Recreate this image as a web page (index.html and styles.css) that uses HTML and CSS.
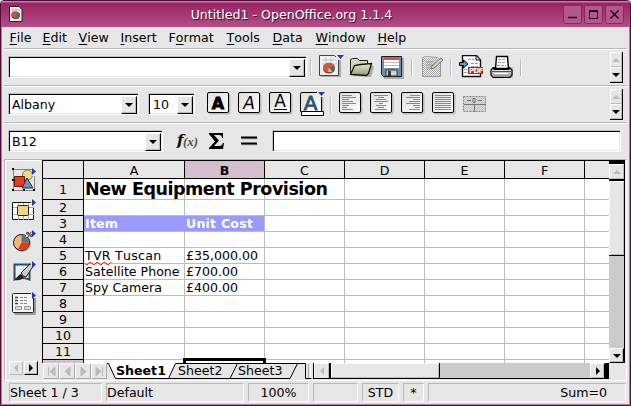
FILE: index.html
```html
<!DOCTYPE html>
<html lang="en">
<head>
<meta charset="utf-8">
<title>Untitled1 - OpenOffice.org 1.1.4</title>
<link rel="stylesheet" href="styles.css">
</head>
<body>
<svg class="defs" width="0" height="0">
  <defs>
    <linearGradient id="face" x1="0" y1="0" x2="1" y2="1"><stop offset="0" stop-color="#dcdcdc"/><stop offset="1" stop-color="#fff"/></linearGradient>
    <linearGradient id="olive" x1="0" y1="0" x2="0" y2="1"><stop offset="0" stop-color="#e8ebd0"/><stop offset="1" stop-color="#92987a"/></linearGradient>
    <linearGradient id="metal" x1="0" y1="0" x2="0" y2="1"><stop offset="0" stop-color="#fff"/><stop offset="1" stop-color="#85858a"/></linearGradient>
    <pattern id="dither" width="2" height="2" patternUnits="userSpaceOnUse"><path d="M0 0h1v1H0zM1 1h1v1H1z" fill="#a8a8a8"/></pattern>
    <g id="tile"><rect x="1.5" y="1.5" width="22" height="21" rx="2" fill="#aaa" opacity=".7"/><rect x=".5" y=".5" width="21" height="20" rx="1.5" fill="url(#face)" stroke="#000"/></g>
    <path id="flag" d="M0 0v7l4-3.5z" fill="#1d3fa5"/>
  </defs>
</svg>
<div class="window">
  <header class="titlebar">
    <svg class="app-icon" width="14" height="17"><path d="M1 .5h9l3 3v12H.5V1z" fill="#eee" stroke="#222"/><path d="M2 4h9M4 2v4M7 2v4" stroke="#bbb"/><ellipse cx="6.500" cy="9" rx="4.500" ry="3.800" fill="#c7503c"/><path d="M7 8l4-1v4l-3 1z" fill="#347880"/><path d="M3 11q3 3 7 1" fill="none" stroke="#71362e"/></svg>
    <h1>Untitled1 - OpenOffice.org 1.1.4</h1>
    <div class="win-buttons">
      <svg width="19" height="19"><rect class="wb" x=".5" y=".5" width="18" height="18" rx="2"/><path d="M5 12.500h9" stroke="#21061a" stroke-width="1.500"/></svg>
      <svg width="19" height="19"><rect class="wb" x=".5" y=".5" width="18" height="18" rx="2"/><path d="M5.500 5.500h8v8h-8zM5 6.500h9" stroke="#21061a" fill="none"/></svg>
      <svg width="19" height="19"><rect class="wb" x=".5" y=".5" width="18" height="18" rx="2"/><path d="M5.500 5.500l8 8m0-8l-8 8" stroke="#21061a" stroke-width="1.500"/></svg>
    </div>
  </header>
  <nav class="menu">
    <span class="m-file"><u>F</u>ile</span><span class="m-edit"><u>E</u>dit</span><span class="m-view"><u>V</u>iew</span><span class="m-insert"><u>I</u>nsert</span><span class="m-format">F<u>o</u>rmat</span><span class="m-tools"><u>T</u>ools</span><span class="m-data"><u>D</u>ata</span><span class="m-window"><u>W</u>indow</span><span><u>H</u>elp</span>
  </nav>

  <section class="bar bar-function">
    <div class="combo url"><span></span><i class="drop"></i></div>
    <i class="grip g1"></i>
    <svg class="i-new" width="27" height="23"><path d="M2 2h20v20H2z" fill="#aaa"/><path d="M.5.5h15l4 4v16H.5z" fill="#f1f1f1" stroke="#444"/><path d="M3 5h15M3 9h15M7 2v16M12 2v6" stroke="#c4c4c4"/><ellipse cx="10" cy="14" rx="6" ry="4.500" fill="#8c3528"/><ellipse cx="10" cy="12.500" rx="6" ry="4.800" fill="#d0583f"/><path d="M10 12.500l6-1q0 4-3 5z" fill="#2a7a86"/><path d="M10 12.500l3 4q-3 1-4 0z" fill="#e7b95b"/><path d="M17 0h8v5h-8z" fill="#e6e6e6"/><path d="M18 0h7l-3.500 4z" fill="#1d3fa5"/></svg>
    <svg class="i-open" width="25" height="23"><path d="M3 20l19 1 3-10-3-3" fill="#aaa"/><path d="M1.500 17.500v-14l2-1h5l2 2h8v4" fill="#d2d6b7" stroke="#222"/><path d="M1.500 18.500l4-9 6-1 11-1-3 10-2 2z" fill="url(#olive)" stroke="#111" stroke-width="1.300"/></svg>
    <svg class="i-save" width="23" height="23"><path d="M2 2h21v21H3z" fill="#aaa"/><path d="M.5.500h20v20h-18l-2-2z" fill="#6c8fac" stroke="#14202b"/><path d="M3 1h15v11H3z" fill="#fff"/><path d="M3 1h15v3H3z" fill="#d95050"/><path d="M3 6.500h15M3 9.500h15" stroke="#bbb"/><path d="M5 14h11v6H5z" fill="#d6d6d2" stroke="#333"/><path d="M7 15h3v5H7z" fill="#333"/></svg>
    <i class="grip g2"></i>
    <svg class="i-edit" width="24" height="23"><path d="M1.500 2.500l3-1 12 1 3 3v16h-18z" fill="#eee" stroke="#999"/><path d="M2 3h17v18H2z" fill="url(#dither)"/><path d="M5 7h7M5 10h7M5 13h5" stroke="#999"/><path d="M10 14l1-3 9-8 2 2-9 8z" fill="#d9d3bf" stroke="#777"/></svg>
    <i class="grip g3"></i>
    <svg class="i-pdf" width="25" height="23"><path d="M3.500.500h14l4 4.500v16.500h-18z" fill="#fff" stroke="#111" stroke-width="1.400"/><path d="M17 1v4h4" fill="#ddd" stroke="#111"/><path d="M9 4.500h6M12 8.500h7M12 11.500h7M5 14.500h4M5 17.500h4" stroke="#999" stroke-dasharray="3 1"/><path d="M.5 7.500h4V5l4.500 4-4.500 4v-2.500h-4z" fill="#5b98c9" stroke="#000"/><path d="M9 12h15v7H9z" fill="#cf1717"/><text x="10" y="18" class="pdf">PDF</text></svg>
    <svg class="i-print" width="24" height="24"><path d="M3 12h20v11H3z" fill="#bbb"/><path d="M5.500 13.500l1-12h11l1 12z" fill="#fff" stroke="#000" stroke-width="1.400"/><path d="M8 4.500h8M8 7.500h8M7 10.500h9" stroke="#999" stroke-dasharray="3 1"/><path d="M3.500 12.500L1 15v5l2 2.500h17l2-2.500v-5l-2.500-2.500h-1l.5 2H4l.500-2z" fill="url(#metal)" stroke="#000" stroke-width="1.200"/><path d="M2 16.500h19" stroke="#555"/><path d="M4 18.500h14" stroke="#fff"/></svg>
    <i class="grip g4"></i>
    <div class="spin"><i class="up"></i><i class="down"></i></div>
  </section>

  <section class="bar bar-object">
    <div class="combo font"><span>Albany</span><i class="drop"></i></div>
    <div class="combo size"><span>10</span><i class="drop"></i></div>
    <svg class="i-fmt first" width="24" height="24"><use href="#tile"/><text x="11" y="16.500" class="gl heavy">A</text></svg>
    <svg class="i-fmt" width="24" height="24"><use href="#tile"/><text x="11" y="16.500" class="gl slant">A</text></svg>
    <svg class="i-fmt" width="24" height="24"><use href="#tile"/><text x="11" y="15" class="gl">A</text><path d="M5 17.500h13" stroke="#000"/></svg>
    <svg class="i-fmt" width="25" height="25"><use href="#tile"/><text x="10.500" y="17.500" class="gl tint">A</text><path d="M17 0h8v5h-8z" fill="#e6e6e6"/><path d="M18 0h7l-3.500 4z" fill="#1d3fa5"/><path d="M1.500 19.500h22v4h-22z" fill="#fff" stroke="#000"/></svg>
    <i class="grip g5"></i>
    <svg class="i-al first" width="24" height="24"><use href="#tile"/><path d="M3 3.500h10M3 5.500h14M3 7.500h7M3 9.500h11M3 11.500h14M3 13.500h7M3 15.500h5M3 17.500h11" stroke="#888"/></svg>
    <svg class="i-al" width="24" height="24"><use href="#tile"/><path d="M4 3.500h14M8 5.500h6M6 7.500h10M4 9.500h14M9 11.500h4M6 13.500h10M8 15.500h6M5 17.500h12" stroke="#888"/></svg>
    <svg class="i-al" width="24" height="24"><use href="#tile"/><path d="M9 3.500h10M5 5.500h14M12 7.500h7M8 9.500h11M5 11.500h14M12 13.500h7M14 15.500h5M8 17.500h11" stroke="#888"/></svg>
    <svg class="i-al" width="24" height="24"><use href="#tile"/><path d="M3 3.500h16M3 5.500h16M3 7.500h16M3 9.500h16M3 11.500h16M3 13.500h16M3 15.500h16M3 17.500h16" stroke="#888"/></svg>
    <svg class="i-merge" width="24" height="17"><path d="M.5.500h22v15H.5z" fill="#ddd" stroke="#888" stroke-dasharray="2 1"/><path d="M1 1h21v14H1z" fill="url(#dither)" opacity=".5"/><path d="M1 8.500h22M11.500 8v8M4 4.500h4M15 4.500h4M10 2.500h2v4h-2z" stroke="#777" fill="none"/></svg>
    <div class="spin"><i class="up"></i><i class="down"></i></div>
  </section>

  <section class="bar bar-formula">
    <div class="combo ref"><span>B12</span><i class="drop"></i></div>
    <svg class="i-fx" width="26" height="24"><text x="3" y="14" class="fx-f">f</text><text x="9" y="14.500" class="fx-x">(x)</text></svg>
    <svg class="i-sum" width="18" height="20"><path d="M1 1h14v5h-1q0-3-3-3H6l5 5.500L6 14h5q3 0 4-3h1l-1 6H1v-1l6-6.500L1 2z" fill="#000"/></svg>
    <svg class="i-eq" width="18" height="12"><path d="M2 3.500h16M2 9.500h16" stroke="#bbb" stroke-width="2"/><path d="M1 2.500h16M1 8.500h16" stroke="#000" stroke-width="2"/></svg>
    <div class="formula"></div>
  </section>

  <main class="work">
    <aside class="side">
      <svg width="26" height="24"><path d="M1.500 1.500h21v21h-21z" fill="none" stroke="#222" stroke-dasharray="1 1"/><path d="M0 0h2v2H0zM0 11h2v2H0zM0 21h2v2H0zM21 21h2v2h-2zM11 21h2v2h-2z"/><circle cx="15.500" cy="7" r="5" fill="#eed88a" stroke="#887b4f"/><path d="M2.500 8.500h10v10h-10z" fill="#e23e1b" stroke="#6c1707"/><path d="M15 10l6 10H10z" fill="#7590b4" stroke="#222e40"/><path d="M20 0h5v8h-5z" fill="#e6e6e6"/><use href="#flag" x="20"/></svg>
      <svg width="26" height="24"><path d="M.5 3.500h21v17H.5z" fill="#fff" stroke="#111"/><path d="M1 8.500h21M1 15.500h21M6.500 4v17M11.500 4v17M16.500 4v17" stroke="#aaa"/><rect x="5.500" y="6.500" width="11" height="10" rx="1" fill="#ecd684" stroke="#222"/><path d="M19 0h5v8h-5z" fill="#e6e6e6"/><use href="#flag" x="20"/></svg>
      <svg width="26" height="24"><circle cx="10.500" cy="13.500" r="8.500" fill="#aaa"/><circle cx="9.500" cy="12.500" r="8" fill="#f0b978" stroke="#111"/><path d="M9.500 12.500V5q7 0 7.500 7.500z" fill="#557791"/><path d="M9.500 12.500H17q0 7-6.500 7.500L6 19z" fill="#e23e1b"/><path d="M14 0h7v7h-7z" fill="#e6e6e6"/><text x="14" y="6.500" class="pct">%</text><use href="#flag" x="20"/></svg>
      <svg width="26" height="24"><path d="M2.500 3.500h15v15q-8-3-15 0z" fill="#e8eef2" stroke="#24506a" stroke-width="2"/><path d="M3 19q3-5 6-6l3 3q-3 4-9 3z" fill="#222"/><path d="M9 12l9-9 4 1-8 12q-3 0-5-4z" fill="#ccc" stroke="#222"/><path d="M19 0h5v5h-5z" fill="#e6e6e6"/><use href="#flag" x="20"/></svg>
      <svg width="26" height="24"><rect x="2" y="3" width="22" height="20" rx="2" fill="#999"/><rect x=".5" y="1.500" width="21" height="19" rx="1" fill="#f4f4f4" stroke="#222"/><path d="M8 5.500h8M8 8.500h8M8 11.500h8" stroke="#888" stroke-dasharray="3 1"/><path d="M3 5.500h3M3 8.500h3M3 11.500h3" stroke="#444" stroke-width="1.500"/><path d="M3.500 14.500h6v3h-6zM12.500 14.500h6v3h-6z" fill="#ddd" stroke="#999"/><path d="M19 0h5v6h-5z" fill="#e6e6e6"/><use href="#flag" x="20"/></svg>
      <div class="side-nav"><i class="btn left off"></i><i class="btn right"></i></div>
    </aside>
    <div class="pane">
      <div class="upper">
        <div class="grid">
          <b class="ch"></b><b class="ch">A</b><b class="ch on">B</b><b class="ch">C</b><b class="ch">D</b><b class="ch">E</b><b class="ch">F</b><b class="ch last"></b>
          <b class="rh">1</b><p class="big"><span>New Equipment Provision</span></p><p></p><p></p><p></p><p></p><p></p><p class="last"></p>
          <b class="rh">2</b><p></p><p></p><p></p><p></p><p></p><p></p><p class="last"></p>
          <b class="rh">3</b><p class="label item">Item</p><p class="label">Unit Cost</p><p></p><p></p><p></p><p></p><p class="last"></p>
          <b class="rh">4</b><p></p><p></p><p></p><p></p><p></p><p></p><p class="last"></p>
          <b class="rh">5</b><p class="spaced"><span class="typo">TVR</span>&nbsp;Tuscan</p><p>£35,000.00</p><p></p><p></p><p></p><p></p><p class="last"></p>
          <b class="rh">6</b><p>Satellite Phone</p><p>£700.00</p><p></p><p></p><p></p><p></p><p class="last"></p>
          <b class="rh">7</b><p>Spy Camera</p><p>£400.00</p><p></p><p></p><p></p><p></p><p class="last"></p>
          <b class="rh">8</b><p></p><p></p><p></p><p></p><p></p><p></p><p class="last"></p>
          <b class="rh">9</b><p></p><p></p><p></p><p></p><p></p><p></p><p class="last"></p>
          <b class="rh">10</b><p></p><p></p><p></p><p></p><p></p><p></p><p class="last"></p>
          <b class="rh">11</b><p></p><p></p><p></p><p></p><p></p><p></p><p class="last"></p>
          <b class="rh on cut"></b><p class="cut"></p><p class="cut active"></p><p class="cut"></p><p class="cut"></p><p class="cut"></p><p class="cut"></p><p class="last cut"></p>
        </div>
        <div class="vscroll"><i class="btn up off"></i><i class="thumb"></i><i class="track"></i><i class="btn down"></i></div>
      </div>
      <div class="lower">
        <div class="tabnav">
          <svg width="16" height="16"><path d="M4.500 3v9M11 3v9L6 7.500z"/></svg><svg width="16" height="16"><path d="M10 3v9L5 7.500z"/></svg><svg width="16" height="16"><path d="M5 3v9l5-4.500z"/></svg><svg width="16" height="16"><path d="M4 3v9l5-4.500zM10.500 3v9"/></svg>
        </div>
        <svg class="tabs" width="206" height="16"><path d="M1 0l8 15.500h53L68 0z" fill="#fff"/><path d="M0 .5h1.500l7 15h53l7-15h130v15h6M61.500 15.500h61.500l7.500-15M123 15.500h60l7.500-15" fill="none" stroke="#000"/><path d="M2 .5h66" stroke="#fff"/><path d="M201.500 1v14" stroke="#aaa"/><path d="M203.500 1v14" stroke="#fff"/><text x="9" y="12" class="tab cur">Sheet1</text><text x="71" y="12" class="tab">Sheet2</text><text x="131" y="12" class="tab">Sheet3</text></svg>
        <div class="hscroll"><i class="btn left off"></i><i class="thumb"></i><i class="track"></i><i class="btn right"></i></div>
      </div>
    </div>
  </main>

  <footer class="status"><span class="left">Sheet 1 / 3</span><span class="left">Default</span><span>100%</span><span></span><span>STD</span><span>*</span><span class="sum">Sum=0</span></footer>
</div>
</body>
</html>
```
FILE: styles.css
```css
*, *::before { box-sizing: border-box; }
body { margin: 0; background: #e6e6e6; font: 12.6px/16px "DejaVu Sans", sans-serif; font-kerning: none; color: #000; overflow: hidden; }
.defs { position: absolute; }
svg { display: block; flex: none; }
.window { width: 631px; height: 406px; display: flex; flex-direction: column; background: #e6e6e6; border: 1px solid #520c39; border-radius: 4px 4px 0 0; box-shadow: inset 0 0 0 1px #b27a9c; padding: 0 1px 1px; }

.titlebar { height: 26px; margin: 0 -1px; padding: 0 6px 0 8px; display: flex; align-items: center; background: linear-gradient(#c77aa4 0 1px, #982360 2px, #b44f88); border-radius: 3px 3px 0 0; }
.titlebar h1 { flex: 1; margin: 2px 0 0; padding-right: 3px; text-align: center; font-size: 12.6px; font-weight: 400; color: #fff; text-shadow: 1px 1px 1px #3c0828; }
.win-buttons { display: flex; gap: 2px; margin-top: 1px; }
.wb { fill: #b2588b; stroke: #84285f; }

.menu { height: 23px; margin: 0 2px; padding: 3px 0 0 5.6px; display: flex; border-bottom: 1px solid #fff; box-shadow: inset 0 -1px #b8b8b8; }
.menu u { text-underline-offset: 2px; text-decoration-skip-ink: none; }
.m-file { width: 33px; } .m-edit { width: 36px; } .m-view { width: 42px; } .m-insert { width: 48px; }
.m-format { width: 58px; } .m-tools { width: 46px; } .m-data { width: 43px; } .m-window { width: 62px; }

.bar { height: 37px; margin: 0 2px; padding: 0 4px; display: flex; align-items: flex-start; border-bottom: 1px solid #fff; box-shadow: inset 0 -1px #b8b8b8; }
.bar-formula { height: 35px; border: 0; box-shadow: none; }
.combo, .formula { height: 22px; margin-top: 6px; border: 1px solid; border-color: #c0c0c0 #fff #fff #c0c0c0; background: #fff; box-shadow: inset 1px 1px #000, inset -1px -1px #e6e6e6; padding: 2px 1px 1px 2px; display: flex; flex: none; }
.combo span { flex: 1; padding: 1px 1px; }
.url { width: 299px; } .font { width: 131px; } .size { width: 47px; margin-left: 9px; } .ref { width: 155px; }
.size span { padding-left: 2px; }
.formula { width: 349px; margin-left: 14px; }
.drop, .btn, .spin i { display: flex; align-items: center; justify-content: center; background: #e6e6e6; border: 1px solid; border-color: #fff #000 #000 #fff; box-shadow: inset -1px -1px #bbb; }
.drop { width: 16px; height: 18px; }
.drop::before, .down::before { content: ""; border: 4px solid transparent; border-top-color: #000; border-bottom: 0; }
.up::before { content: ""; border: 4px solid transparent; border-bottom-color: #bbb; border-top: 0; }
.left.btn::before { content: ""; border: 4px solid transparent; border-right-color: #bbb; border-left: 0; }
.right.btn::before { content: ""; border: 4px solid transparent; border-left-color: #000; border-right: 0; }
.btn.off { border-color: #fff #bbb #bbb #fff; box-shadow: none; }
.grip { width: 2px; height: 17px; margin-top: 9px; border-left: 1px solid #b8b8b8; border-right: 1px solid #fff; flex: none; }
.g1 { margin-left: 3px; } .g2 { margin-left: 7px; } .g3 { margin-left: 5px; } .g4 { margin-left: 6px; } .g5 { margin-left: 5px; }
.i-new { margin: 5px 0 0 7px; } .i-open { margin: 6px 0 0 3px; } .i-save { margin: 6px 0 0 7px; }
.i-edit { margin: 5px 0 0 8px; } .i-pdf { margin: 5px 0 0 7px; } .i-print { margin: 5px 0 0 6px; }
.spin { width: 13px; margin: 2px 0 0 auto; border-right: 1px solid #000; border-bottom: 1px solid #000; }
.spin i { height: 15px; border-color: #fff #bbb #bbb #fff; box-shadow: none; }
.pdf { font: bold 7px "DejaVu Sans", sans-serif; fill: #fff; letter-spacing: -.7px; }
.i-fmt { margin: 5px 0 0 7px; } .i-fmt.first { margin-left: 12px; }
.i-al { margin: 5px 0 0 7px; } .i-al.first { margin-left: 7px; }
.i-merge { margin: 9px 0 0 7px; }
.gl { font: 17px "DejaVu Sans", sans-serif; text-anchor: middle; }
.gl.heavy { font-size: 16px; font-weight: 700; stroke: #000; stroke-width: .8px; }
.slant { font-style: italic; }
.gl.tint { font-size: 20px; fill: #2d536f; stroke: #2d536f; stroke-width: .8px; }
.i-fx { margin: 7px 0 0 11px; }
.fx-f { font: italic bold 15px "DejaVu Serif", serif; }
.fx-x { font: italic bold 13px "Liberation Serif", serif; fill: #555049; }
.i-sum { margin: 8px 0 0 8px; } .i-eq { margin: 11px 0 0 14px; }

.work { height: 222px; margin: 0 2px; display: flex; border: 1px solid; border-color: #b8b8b8 #fff #fff #b8b8b8; }
.side { width: 37px; padding: 7px 0 0 6px; display: flex; flex-direction: column; gap: 7px; border-left: 1px solid #fff; border-top: 1px solid #fff; }
.side-nav { display: flex; gap: 1px; margin: 38px 0 0 -3px; }
.side-nav .btn { width: 14px; height: 14px; }
.pct { font: bold 7px "DejaVu Sans", sans-serif; }
.pane { width: 583px; }
.upper { display: flex; height: 203px; }
.grid { width: 567px; height: 203px; overflow: hidden; display: grid; grid-template-columns: 41px 101px repeat(5, 80px) 24px; grid-template-rows: 18px 21px repeat(10, 16px) 3px; border-left: 1px solid #000; border-top: 1px solid #000; background: #fff; }
.grid p { margin: 0; padding-left: 1px; border-right: 1px solid #bbb; border-bottom: 1px solid #bbb; white-space: nowrap; line-height: 16px; min-width: 0; }
.grid b { background: #e6e6e6; border-right: 1px solid #000; border-bottom: 1px solid #000; font-weight: 400; text-align: center; line-height: 16px; }
.grid .ch { line-height: 20px; }
.grid .rh:nth-child(9) { line-height: 21px; }
.grid .on { background: #d5bfce; font-weight: 700; }
.grid .last { border-right: 0; }
.grid .cut { border-bottom: 0; }
.big { font-size: 17.5px; letter-spacing: -.46px; font-weight: 700; }
.grid .big { line-height: 20px; }
.big span { position: relative; z-index: 1; }
.grid .label { background: #9999ff; color: #fff; font-weight: 700; letter-spacing: .2px; }
.grid .item { border-right-color: #9999ff; }
.spaced { letter-spacing: .25px; }
.typo { text-decoration: underline wavy #e00 1px; text-underline-offset: 1px; text-decoration-skip-ink: none; }
.active { position: relative; }
.active::before { content: ""; position: absolute; left: -2px; top: -2px; width: 83px; height: 10px; border: 3px solid #000; }
.vscroll { width: 16px; height: 203px; border-top: 4px solid #000; border-right: 1px solid #000; display: flex; flex-direction: column; }
.vscroll .btn { height: 15px; flex: none; }
.vscroll .thumb { height: 77px; border-top: 2px solid #000; border-bottom: 1px solid #000; background: #e6e6e6; box-shadow: inset 1px 1px #fff, inset -1px -1px #bbb; }
.track { flex: 1; background: #cbcbcb; }
.lower { display: flex; height: 16px; }
.tabnav { display: flex; width: 65px; padding-left: 1px; }
.tabnav svg { border: 1px solid; border-color: #fff #aaa #aaa #fff; fill: #bbb; stroke: #bbb; }
.tab { font-size: 12.6px; }
.cur { font-weight: 700; }
.hscroll { width: 296px; display: flex; border-left: 1px solid #000; border-right: 4px solid #000; border-bottom: 1px solid #000; }
.hscroll .btn { width: 15px; height: 15px; border-bottom: 0; flex: none; }
.hscroll .thumb { width: 111px; border-left: 2px solid #000; border-right: 1px solid #000; background: #e6e6e6; box-shadow: inset 1px 1px #fff, inset -1px -1px #bbb; }

.status { height: 19px; margin: 2px 2px 0 7px; display: grid; grid-template-columns: 93px 138px 61px 45px 37px 21px 198px; gap: 4px; }
.status span { border: 1px solid; border-color: #b8b8b8 #fff #fff #b8b8b8; text-align: center; line-height: 17px; white-space: nowrap; }
.status .left { text-align: left; }
.status .sum { text-align: right; padding-right: 18px; }
```
